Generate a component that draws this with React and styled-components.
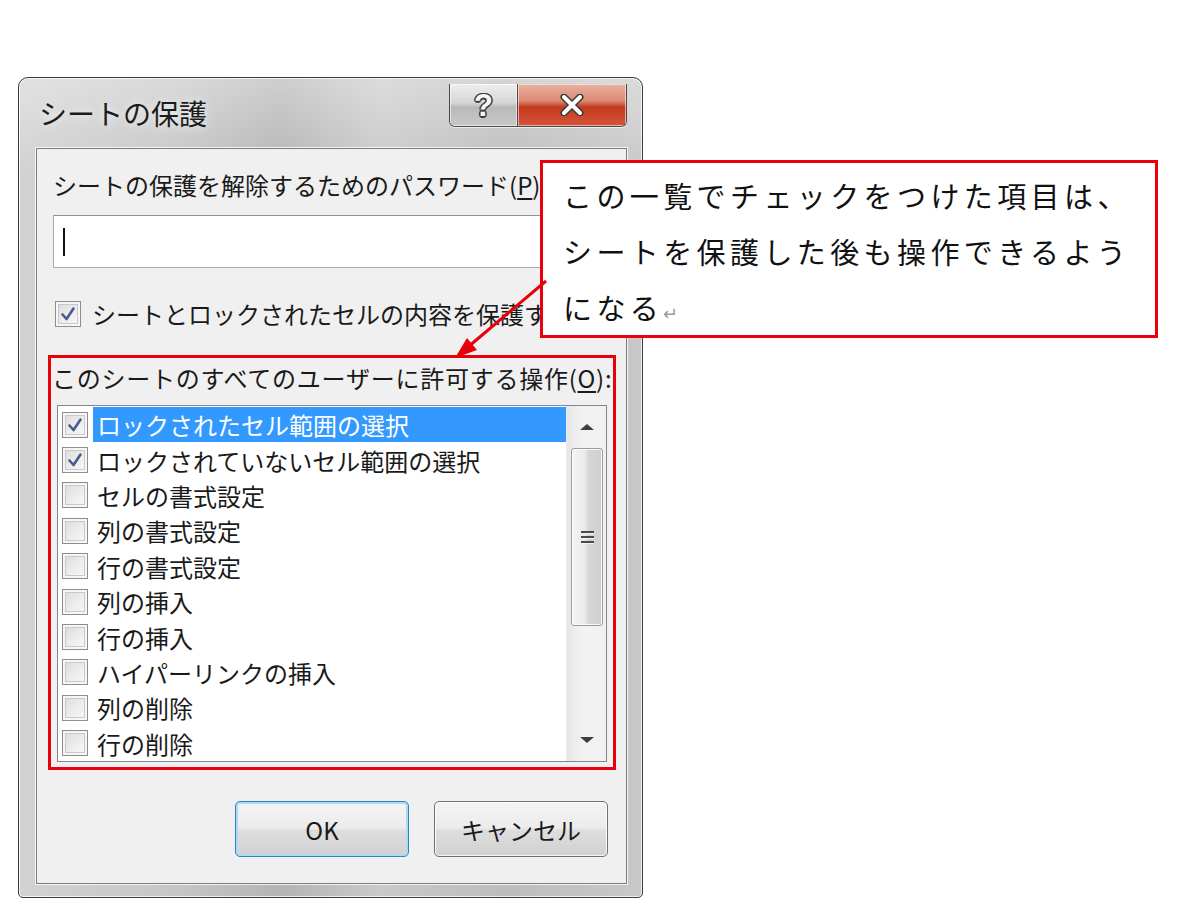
import styled, { createGlobalStyle } from "styled-components";

const GlobalStyle = createGlobalStyle`
  html, body {
    margin: 0;
    background: #ffffff;
  }
  body {
    font-family: "Noto Sans CJK JP", "Noto Sans", sans-serif;
    color: #1a1a1a;
  }
`;

const RED = "#e8000b";

const Canvas = styled.div`
  position: relative;
  width: 1200px;
  height: 921px;
  overflow: hidden;
  box-sizing: border-box;
  padding: 77px 0 0 18px;
`;

/* ---------- dialog frame ---------- */

const Window = styled.div`
  width: 625px;
  height: 821px;
  box-sizing: border-box;
  display: flex;
  flex-direction: column;
  padding: 0 15px 13px 17px;
  border: 1px solid #3b3b3b;
  border-radius: 10px 10px 5px 5px;
  background:
    linear-gradient(180deg, rgba(255, 255, 255, 0.35) 0%, rgba(255, 255, 255, 0) 12%),
    linear-gradient(90deg, #d2d2d2 0%, #c6c6c6 25%, #b4b4b4 42%, #c9c9c9 58%, #bdbdbd 78%, #c8c8c8 100%);
  box-shadow: inset 0 0 0 1px rgba(255, 255, 255, 0.75);
`;

const TitleBar = styled.div`
  height: 70px;
  display: flex;
  align-items: flex-start;
`;

const Title = styled.div`
  margin: 19px 0 0 3px;
  font-size: 28px;
  line-height: 32px;
  color: #1c1c1c;
  text-shadow: 0 0 8px rgba(255, 255, 255, 0.9);
`;

const CaptionGroup = styled.div`
  margin: 6px 0 0 auto;
  display: flex;
  height: 42px;
  border: 1px solid #4a4a4a;
  border-top: none;
  border-radius: 0 0 6px 6px;
  overflow: hidden;
  box-shadow: 0 1px 0 rgba(255, 255, 255, 0.7);
`;

const CaptionButton = styled.div`
  width: ${(p) => p.$w}px;
  display: flex;
  align-items: center;
  justify-content: center;
  box-shadow: inset 0 0 0 1px rgba(255, 255, 255, 0.55);
  background: ${(p) =>
    p.$close
      ? "linear-gradient(180deg, #eab0a0 0%, #dc8a74 40%, #c53a1f 55%, #d4553a 100%)"
      : "linear-gradient(180deg, #eeeeee 0%, #d6d6d6 45%, #b9b9b9 55%, #c8c8c8 100%)"};
  & + & {
    border-left: 1px solid #4a4a4a;
  }
`;

const HelpGlyph = styled.span`
  font-family: "Liberation Sans", "Noto Sans", sans-serif;
  font-weight: 700;
  font-size: 31px;
  line-height: 1;
  color: #f6f6f6;
  text-shadow:
    -1.5px 0 #3c3c3c, 1.5px 0 #3c3c3c, 0 -1.5px #3c3c3c, 0 1.5px #3c3c3c,
    -1px -1px #3c3c3c, 1px 1px #3c3c3c, -1px 1px #3c3c3c, 1px -1px #3c3c3c;
`;

/* ---------- client area ---------- */

const Client = styled.div`
  flex: 1;
  display: flex;
  flex-direction: column;
  background: #f0f0f0;
  border: 1px solid #7c7c7c;
  box-shadow: 0 0 0 1px rgba(255, 255, 255, 0.8);
`;

const Label = styled.div`
  font-size: 24px;
  line-height: 28px;
  white-space: nowrap;
  color: #1a1a1a;
`;

const PasswordLabel = styled(Label)`
  margin: 22px 0 0 16px;
`;

const Underlined = styled.span`
  text-decoration: underline;
  text-underline-offset: 3px;
`;

const PasswordInput = styled.div`
  margin: 16px 0 0 16px;
  width: 559px;
  height: 53px;
  box-sizing: border-box;
  background: #ffffff;
  border: 1px solid #a9abb1;
  border-top-color: #8f9197;
  display: flex;
  align-items: center;
  padding-left: 9px;
`;

const Caret = styled.div`
  width: 2px;
  height: 28px;
  background: #111;
`;

const ProtectRow = styled.div`
  margin: 32px 0 0 18px;
  display: flex;
  align-items: center;
  gap: 11px;
`;

const Box = styled.div`
  flex: none;
  width: 26px;
  height: 26px;
  box-sizing: border-box;
  border: 1px solid #8d8d8d;
  background: linear-gradient(135deg, #d9d9d9 0%, #ededed 55%, #fafafa 100%);
  box-shadow: inset 0 0 0 2px #f6f6f6, inset 0 0 0 3px #c9c9c9;
  display: flex;
  align-items: center;
  justify-content: center;
`;

const CheckBox = ({ checked }) => (
  <Box>
    {checked && (
      <svg width="18" height="18" viewBox="0 0 18 18">
        <path
          d="M3.5 9.5 L7.5 14 L14.5 3.5"
          fill="none"
          stroke="#4b5a8e"
          strokeWidth="2.6"
          strokeLinecap="round"
          strokeLinejoin="round"
        />
      </svg>
    )}
  </Box>
);

const GroupBox = styled.div`
  margin: 27px 0 0 11px;
  width: 568px;
  height: 415px;
  box-sizing: border-box;
  border: 3px solid ${RED};
  display: flex;
  flex-direction: column;
`;

const GroupLabel = styled(Label)`
  margin: 6px 0 0 1px;
  letter-spacing: 0.75px;
`;

const ListBox = styled.div`
  margin: 13px 0 0 6px;
  width: 550px;
  height: 357px;
  box-sizing: border-box;
  background: #ffffff;
  border: 1px solid #828790;
  display: flex;
`;

const Items = styled.div`
  flex: 1;
  padding-top: 1px;
  overflow: hidden;
`;

const Row = styled.div`
  height: 35.4px;
  display: flex;
  align-items: center;
  padding-left: 4px;
  gap: 5px;
`;

const RowLabel = styled.div`
  flex: 1;
  align-self: stretch;
  display: flex;
  align-items: center;
  padding-left: 4px;
  font-size: 24px;
  white-space: nowrap;
  color: ${(p) => (p.$selected ? "#ffffff" : "#1a1a1a")};
  background: ${(p) => (p.$selected ? "#3399ff" : "transparent")};
`;

/* ---------- scrollbar ---------- */

const ScrollBar = styled.div`
  width: 39px;
  display: flex;
  flex-direction: column;
  background: linear-gradient(90deg, #e6e6e6 0%, #f3f3f3 40%, #f0f0f0 100%);
  border-left: 1px solid #ececec;
`;

const ScrollButton = styled.div`
  height: 42px;
  display: flex;
  align-items: center;
  justify-content: center;
`;

const Arrow = styled.div`
  width: 0;
  height: 0;
  border-left: 7px solid transparent;
  border-right: 7px solid transparent;
  ${(p) =>
    p.$down ? "border-top: 6px solid #3e3e3e;" : "border-bottom: 6px solid #3e3e3e;"}
`;

const Thumb = styled.div`
  height: 178px;
  margin: 0 3px 0 4px;
  box-sizing: border-box;
  border: 1px solid #9b9b9b;
  border-radius: 3px;
  background: linear-gradient(90deg, #f4f4f4 0%, #e9e9e9 45%, #d6d6d6 55%, #cfcfcf 100%);
  box-shadow: inset 0 0 0 1px rgba(255, 255, 255, 0.8);
  display: flex;
  flex-direction: column;
  align-items: center;
  justify-content: center;
  gap: 3px;
`;

const Grip = styled.div`
  width: 13px;
  height: 2px;
  background: #4a4a4a;
  box-shadow: 0 1px 0 #f4f4f4;
`;

const Track = styled.div`
  flex: 1;
`;

/* ---------- buttons ---------- */

const ButtonRow = styled.div`
  margin: 31px 18px 0 0;
  display: flex;
  justify-content: flex-end;
  gap: 25px;
`;

const Button = styled.div`
  width: 174px;
  height: 56px;
  box-sizing: border-box;
  border-radius: 5px;
  border: 1px solid ${(p) => (p.$default ? "#3c7fb1" : "#707070")};
  background: linear-gradient(180deg, #f4f4f4 0%, #ececec 48%, #dedede 52%, #d1d1d1 100%);
  box-shadow: ${(p) =>
    p.$default
      ? "inset 0 0 0 2px #a7dcf6"
      : "inset 0 0 0 1px rgba(255, 255, 255, 0.85)"};
  display: flex;
  align-items: center;
  justify-content: center;
  font-size: 24px;
  color: #1a1a1a;
`;

/* ---------- annotation ---------- */

const Callout = styled.div`
  position: absolute;
  left: 540px;
  top: 160px;
  width: 618px;
  height: 178px;
  box-sizing: border-box;
  border: 3px solid ${RED};
  background: #ffffff;
  padding: 4px 0 0 20px;
  font-size: 29px;
  line-height: 56px;
  letter-spacing: 4.4px;
  color: #111;
`;

const ReturnMark = styled.span`
  color: #9a9a9a;
  font-size: 18px;
  letter-spacing: 0;
`;

const Pointer = styled.svg`
  position: absolute;
  left: 0;
  top: 0;
  pointer-events: none;
`;

const permissions = [
  { label: "ロックされたセル範囲の選択", checked: true, selected: true },
  { label: "ロックされていないセル範囲の選択", checked: true },
  { label: "セルの書式設定" },
  { label: "列の書式設定" },
  { label: "行の書式設定" },
  { label: "列の挿入" },
  { label: "行の挿入" },
  { label: "ハイパーリンクの挿入" },
  { label: "列の削除" },
  { label: "行の削除" },
];

const App = () => {
  return (
    <>
      <GlobalStyle />
      <Canvas>
        <Window>
          <TitleBar>
            <Title>シートの保護</Title>
            <CaptionGroup>
              <CaptionButton $w={67}>
                <HelpGlyph>?</HelpGlyph>
              </CaptionButton>
              <CaptionButton $w={108} $close>
                <svg width="26" height="22" viewBox="0 0 26 22">
                  <path
                    d="M5 3 L21 19 M21 3 L5 19"
                    stroke="#3a3a3a"
                    strokeWidth="7"
                    strokeLinecap="round"
                  />
                  <path
                    d="M5 3 L21 19 M21 3 L5 19"
                    stroke="#ffffff"
                    strokeWidth="4"
                    strokeLinecap="round"
                  />
                </svg>
              </CaptionButton>
            </CaptionGroup>
          </TitleBar>

          <Client>
            <PasswordLabel>
              シートの保護を解除するためのパスワード(<Underlined>P</Underlined>):
            </PasswordLabel>
            <PasswordInput>
              <Caret />
            </PasswordInput>

            <ProtectRow>
              <CheckBox checked />
              <Label>シートとロックされたセルの内容を保護する</Label>
            </ProtectRow>

            <GroupBox>
              <GroupLabel>
                このシートのすべてのユーザーに許可する操作(<Underlined>O</Underlined>):
              </GroupLabel>
              <ListBox>
                <Items>
                  {permissions.map((item) => (
                    <Row key={item.label}>
                      <CheckBox checked={item.checked} />
                      <RowLabel $selected={item.selected}>{item.label}</RowLabel>
                    </Row>
                  ))}
                </Items>
                <ScrollBar>
                  <ScrollButton>
                    <Arrow />
                  </ScrollButton>
                  <Thumb>
                    <Grip />
                    <Grip />
                    <Grip />
                  </Thumb>
                  <Track />
                  <ScrollButton>
                    <Arrow $down />
                  </ScrollButton>
                </ScrollBar>
              </ListBox>
            </GroupBox>

            <ButtonRow>
              <Button $default>OK</Button>
              <Button>キャンセル</Button>
            </ButtonRow>
          </Client>
        </Window>

        <Callout>
          この一覧でチェックをつけた項目は、
          <br />
          シートを保護した後も操作できるよう
          <br />
          になる<ReturnMark>↵</ReturnMark>
        </Callout>

        <Pointer width="1200" height="921">
          <line x1="546" y1="281" x2="468" y2="347" stroke={RED} strokeWidth="3" />
          <polygon points="455,358 477,350 467,338" fill={RED} />
        </Pointer>
      </Canvas>
    </>
  );
};

export default App;
